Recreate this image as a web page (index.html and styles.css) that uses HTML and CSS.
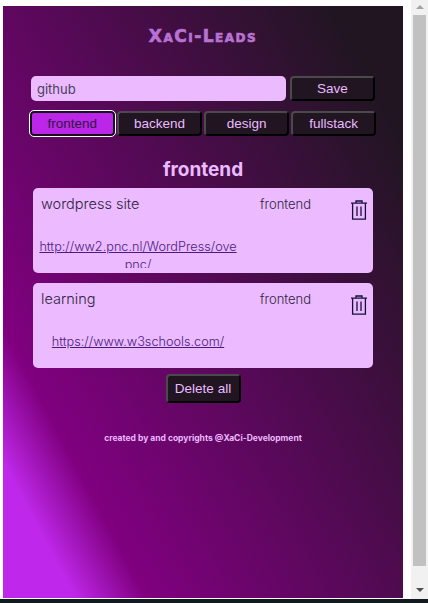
FILE: index.html

```html
<!DOCTYPE html>
<html lang="en">
<head>
  <meta charset="UTF-8">
  <title>XaCi-Leads</title>
  <meta name="viewport" content="width=device-width, initial-scale=1.0">
  <link rel="stylesheet" href="styles.css">
</head>
<body>
  <div class="window">
    <main class="app">
      <h1 class="logo">XaCi-Leads</h1>

      <div class="input-row">
        <input class="lead-input" type="text" value="github">
        <button class="btn save-btn">Save</button>
      </div>

      <div class="tabs">
        <button class="btn tab active">frontend</button>
        <button class="btn tab">backend</button>
        <button class="btn tab">design</button>
        <button class="btn tab">fullstack</button>
      </div>

      <h2 class="section-title">frontend</h2>

      <ul class="leads">
        <li class="lead">
          <span class="lead-name">wordpress site</span>
          <span class="lead-tag">frontend</span>
          <button class="trash" aria-label="Delete">
            <svg width="18" height="20" viewBox="0 0 18 20" fill="none" stroke="#15103a" stroke-width="1.3">
              <path d="M1 3.2h16"/>
              <path d="M6 3V1h6v2"/>
              <path d="M2.6 3.2v15.9h12.8V3.2"/>
              <path d="M7 6.5v9.5M11 6.5v9.5"/>
            </svg>
          </button>
          <a class="lead-link" href="#">http://ww2.pnc.nl/WordPress/ove<br>pnc/</a>
        </li>
        <li class="lead">
          <span class="lead-name">learning</span>
          <span class="lead-tag">frontend</span>
          <button class="trash" aria-label="Delete">
            <svg width="18" height="20" viewBox="0 0 18 20" fill="none" stroke="#15103a" stroke-width="1.3">
              <path d="M1 3.2h16"/>
              <path d="M6 3V1h6v2"/>
              <path d="M2.6 3.2v15.9h12.8V3.2"/>
              <path d="M7 6.5v9.5M11 6.5v9.5"/>
            </svg>
          </button>
          <a class="lead-link" href="#">https://www.w3schools.com/</a>
        </li>
      </ul>

      <button class="btn delete-all">Delete all</button>

      <p class="credits">created by and copyrights @XaCi-Development</p>
    </main>

    <div class="scrollbar">
      <span class="arrow up"></span>
      <div class="thumb"></div>
      <span class="arrow down"></span>
    </div>
  </div>
  <div class="taskbar"></div>
</body>
</html>
```

FILE: styles.css

```css
* {
  box-sizing: border-box;
}

html, body {
  height: 100%;
}

body {
  margin: 0;
  background: #fff;
  font-family: 'Inter', 'Liberation Sans', sans-serif;
  overflow: hidden;
  display: flex;
  flex-direction: column;
}

.window {
  height: 599px;
  display: flex;
  justify-content: space-between;
}

.taskbar {
  flex: 1;
  background: #111a1f;
}

.app {
  width: 400px;
  height: 592px;
  margin: 6px 0 0 3px;
  padding: 22px 28px 0;
  background: linear-gradient(62deg, #bf28ea 0%, #bf28ea 10%, #800080 20%, #211522 90%);
  display: flex;
  flex-direction: column;
  align-items: center;
}

.logo {
  margin: 0 0 31px;
  height: 17px;
  font-family: 'DejaVu Sans', sans-serif;
  font-size: 17px;
  line-height: 17px;
  font-weight: bold;
  font-variant: small-caps;
  color: #b772d2;
  letter-spacing: 1.5px;
  -webkit-text-stroke: 0.7px #b772d2;
}

.input-row {
  align-self: stretch;
  display: flex;
  gap: 4px;
  margin-bottom: 10px;
}

.lead-input {
  width: 255px;
  height: 25px;
  padding: 0 6px;
  border: 0;
  border-radius: 5px;
  background: #ebbaff;
  color: #4a3f5a;
  font-family: inherit;
  font-size: 13px;
}

.btn {
  background: #211522;
  color: #ebbaff;
  border: 2px outset #4a4a4a;
  border-right-color: #0a0a0a;
  border-bottom-color: #0a0a0a;
  border-radius: 4px;
  font-family: 'Liberation Sans', Arial, sans-serif;
  font-size: 13.5px;
  padding: 0;
}

.save-btn {
  width: 85px;
  height: 25px;
}

.tabs {
  align-self: stretch;
  margin: 0 -1px;
  display: flex;
  gap: 2.5px;
}

.tab {
  flex: 1;
  height: 25px;
}

.active {
  background: #bc26e8;
  color: #2e1a3e;
  border: 2px solid #15101a;
  outline: 1.5px solid #fff;
  outline-offset: -0.5px;
}

.section-title {
  margin: 22px 0 6px;
  font-size: 19px;
  line-height: 24px;
  font-weight: 700;
  color: #ebbaff;
}

.leads {
  list-style: none;
  margin: 0;
  padding: 0;
  width: 340px;
  display: flex;
  flex-direction: column;
  gap: 10px;
}

.lead {
  height: 85px;
  padding: 6px 0 0 5px;
  border-radius: 5px;
  background: #ebbaff;
  overflow: hidden;
  display: grid;
  grid-template-columns: 222px 90px 18px;
  grid-template-rows: 30px auto;
  color: #2e2440;
}

.lead-name {
  margin-left: 3px;
  font-size: 14.5px;
  line-height: 20px;
  font-weight: 300;
}

.lead-tag {
  font-size: 13px;
  line-height: 20px;
  font-weight: 300;
}

.trash {
  margin: 6px 0 0 -1px;
  padding: 0;
  border: 0;
  background: none;
  height: 20px;
}

.lead-link {
  grid-column: 1;
  display: block;
  width: 200px;
  height: 30px;
  margin-top: 14px;
  overflow: hidden;
  text-align: center;
  white-space: nowrap;
  font-size: 12.7px;
  line-height: 18px;
  font-weight: 300;
  color: #4b1a80;
}

.delete-all {
  width: 75px;
  height: 29px;
  margin-top: 6px;
}

.credits {
  margin: 30px 0 0;
  font-size: 8.5px;
  font-weight: 700;
  color: #ebbaff;
}

.scrollbar {
  width: 17px;
  background: #f1f1f1;
  display: flex;
  flex-direction: column;
  align-items: center;
}

.thumb {
  flex: 1;
  width: 13px;
  margin-bottom: 22px;
  background: #c1c1c1;
}

.arrow {
  display: block;
  width: 0;
  height: 0;
  border-left: 4px solid transparent;
  border-right: 4px solid transparent;
}

.up {
  margin: 5px 0 6px;
  border-bottom: 4px solid #a3a3a3;
}

.down {
  margin-bottom: 7px;
  border-top: 4px solid #505050;
}
```
